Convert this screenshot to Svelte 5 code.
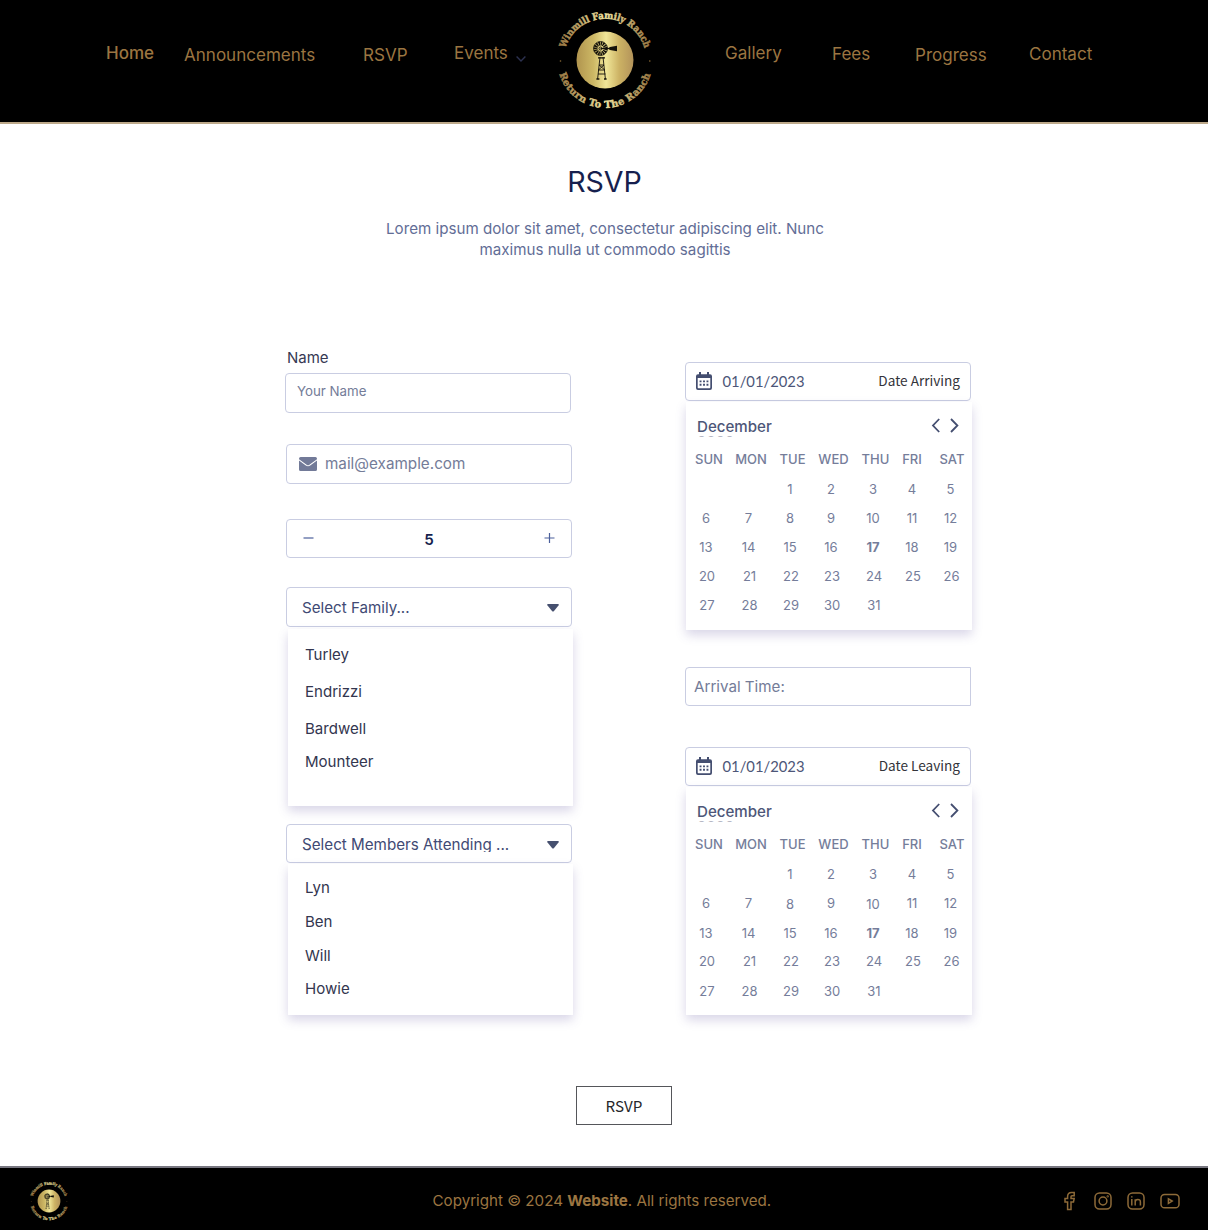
<script>
  const left = [
    ['Home', 'strong'], ['Announcements', 'low'], ['RSVP', 'low'], ['Events', '']
  ];
  const right = [['Gallery', ''], ['Fees', 'mid'], ['Progress', 'low'], ['Contact', 'mid']];
  const families = ['Turley', 'Endrizzi', 'Bardwell', 'Mounteer'];
  const members = ['Lyn', 'Ben', 'Will', 'Howie'];
  const days = ['SUN', 'MON', 'TUE', 'WED', 'THU', 'FRI', 'SAT'];
  const weeks = [
    ['', '', 1, 2, 3, 4, 5],
    [6, 7, 8, 9, 10, 11, 12],
    [13, 14, 15, 16, 17, 18, 19],
    [20, 21, 22, 23, 24, 25, 26],
    [27, 28, 29, 30, 31, '', '']
  ];
</script>

{#snippet logo(id)}
  <svg class="logo" viewBox="-50 -50 100 100" aria-label="Winmill Family Ranch">
    <defs>
      <linearGradient id="{id}-disc" x1="0" x2="1" y1="0" y2="0">
        <stop offset="0" stop-color="#b0944e" />
        <stop offset=".3" stop-color="#cdb865" />
        <stop offset=".52" stop-color="#f0e698" />
        <stop offset=".75" stop-color="#ccb264" />
        <stop offset="1" stop-color="#b3935a" />
      </linearGradient>
      <linearGradient id="{id}-ink" gradientUnits="userSpaceOnUse" x1="-48" x2="48" y1="0" y2="0">
        <stop offset="0" stop-color="#94703c" />
        <stop offset=".5" stop-color="#f2e6a0" />
        <stop offset="1" stop-color="#94703c" />
      </linearGradient>
      <path id="{id}-top" d="M-39.6 -11.6A41.3 41.3 0 0 1 40.1 -10" />
      <path id="{id}-bottom" d="M-45.7 14A47.8 47.8 0 0 0 45.7 14" />
    </defs>
    <circle r="28.5" fill="url(#{id}-disc)" />
    <g fill="url(#{id}-ink)" stroke="url(#{id}-ink)" class="ring">
      <text><textPath href="#{id}-top" textLength="106" lengthAdjust="spacingAndGlyphs">Winmill Family Ranch</textPath></text>
      <text><textPath href="#{id}-bottom" textLength="121" lengthAdjust="spacing">Return To The Ranch</textPath></text>
    </g>
    <circle cx="-44.5" cy="1" r=".8" fill="#8d6a35" />
    <circle cx="44.8" cy="1" r=".8" fill="#8d6a35" />
    <g fill="none" stroke="#14110a">
      <circle cx="-4.5" cy="-11.5" r="5" stroke-width="4" stroke-dasharray="1.5 .6" />
      <circle cx="-4.5" cy="-11.5" r="7" stroke-width=".7" />
      <circle cx="-4.5" cy="-11.5" r="1.5" stroke-width=".9" />
      <path d="M-4.5 -11.5H5" stroke-width="1.2" />
      <path d="M-5 -3L-7.4 19M-2 -3L.4 19M-6 5H-1M-6.6 10H-.2M-6 5L-.2 10M-1 5L-6.6 10M-7 14H.5" stroke-width=".9" />
      <path d="M-7 -2.2H0M-8.6 19H-5.6M-1 19H1.6" stroke-width="1.3" />
    </g>
    <path d="M3 -11.5L5 -13L12 -14.2V-8.8L5 -10Z" fill="#14110a" />
  </svg>
{/snippet}

{#snippet calendar(label, kind)}
  <div class="field date">
    <svg class="cal-icon" viewBox="0 0 16 18">
      <path d="M2 2.2H14A2 2 0 0 1 16 4.2V16A2 2 0 0 1 14 18H2A2 2 0 0 1 0 16V4.2A2 2 0 0 1 2 2.2ZM1.7 6V15.6Q1.7 16.3 2.4 16.3H13.6Q14.3 16.3 14.3 15.6V6Z" fill-rule="evenodd" />
      <path d="M3 0H5V3H3ZM11 0H13V3H11ZM3.6 8.4H5.5V10.3H3.6ZM7.05 8.4H8.95V10.3H7.05ZM10.5 8.4H12.4V10.3H10.5ZM3.6 11.8H5.5V13.7H3.6ZM7.05 11.8H8.95V13.7H7.05ZM10.5 11.8H12.4V13.7H10.5Z" />
    </svg>
    <span class="date-value">01/01/2023</span>
    <span class="date-label">{label}</span>
  </div>
  <div class="panel calendar {kind}">
    <div class="cal-head">
      <div class="month"><span>December</span><span class="year">2022</span></div>
      <svg class="arrows" viewBox="0 0 28 15"><path d="M8.2 1L2 7.5L8.2 14M20 1L26.4 7.5L20 14" /></svg>
    </div>
    <div class="week days">
      {#each days as d}<span>{d}</span>{/each}
    </div>
    {#each weeks as w}
      <div class="week">
        {#each w as d}<span class:today={d === 17}>{d}</span>{/each}
      </div>
    {/each}
  </div>
{/snippet}

<div class="page">
  <header>
    <nav>
      {#each left as [t, c]}<a class={c}>{t}</a>{/each}
      <svg class="chev" viewBox="0 0 10 6"><path d="M.6 .6L5 5L9.4 .6" /></svg>
      {@render logo('main')}
      {#each right as [t, c]}<a class={c}>{t}</a>{/each}
    </nav>
  </header>

  <main>
    <h1>RSVP</h1>
    <p class="intro">Lorem ipsum dolor sit amet, consectetur adipiscing elit. Nunc<br />maximus nulla ut commodo sagittis</p>

    <div class="form">
      <div class="col left">
        <span class="name-label">Name</span>
        <div class="field name">Your Name</div>
        <div class="field mail">
          <svg viewBox="0 0 18 14"><path d="M1.6 0H16.4Q18 0 18 1.7V2.2L10.4 7.8Q9 8.8 7.6 7.8L0 2.2V1.7Q0 0 1.6 0ZM0 3.4L6.8 8.6Q9 10.1 11.2 8.6L18 3.4V12.4Q18 14 16.4 14H1.6Q0 14 0 12.4Z" /></svg>
          <span>mail@example.com</span>
        </div>
        <div class="field stepper">
          <svg viewBox="0 0 10 10"><path d="M0 5H10" /></svg>
          <b>5</b>
          <svg viewBox="0 0 10 10"><path d="M0 5H10M5 0V10" /></svg>
        </div>
        <div class="field select">
          <span>Select Family...</span>
          <svg viewBox="0 0 12 8"><path d="M1 0H11Q12.4 .3 11.5 1.5L7 7Q6 8 5 7L.5 1.5Q-.4 .3 1 0Z" /></svg>
        </div>
        <div class="panel list families">
          {#each families as f}<span>{f}</span>{/each}
        </div>
        <div class="field select members-select">
          <span>Select Members Attending ...</span>
          <svg viewBox="0 0 12 8"><path d="M1 0H11Q12.4 .3 11.5 1.5L7 7Q6 8 5 7L.5 1.5Q-.4 .3 1 0Z" /></svg>
        </div>
        <div class="panel list members">
          {#each members as m}<span>{m}</span>{/each}
        </div>
      </div>
      <div class="col right">
        {@render calendar('Date Arriving', 'arriving')}
        <div class="field time">Arrival Time:</div>
        {@render calendar('Date Leaving', 'leaving')}
      </div>
    </div>
    <button>RSVP</button>
  </main>

  <footer>
    {@render logo('small')}
    <p>Copyright © 2024 <b>Website</b>. All rights reserved.</p>
    <div class="social">
      <svg viewBox="0 0 20 20"><path d="M13.8 1.5H11.6Q7.6 1.5 7.6 5.5V7.6H5V11H7.6V18.6H11V11H13.5L14.2 7.6H11V5.8Q11 4.8 12 4.8H14.2V1.5Z" /></svg>
      <svg viewBox="0 0 20 20"><rect x="2" y="2" width="16" height="16" rx="4.5" /><circle cx="10" cy="10" r="3.9" /><circle cx="14.7" cy="5.4" r=".4" /></svg>
      <svg viewBox="0 0 20 20"><rect x="2" y="2" width="16" height="16" rx="4.5" /><path d="M5.8 8V14.6M5.8 5.2V6.4M9.2 14.6V8.2M9.2 11Q9.2 8.4 11.8 8.4T14.4 11V14.6" /></svg>
      <svg viewBox="0 0 20 20"><rect x="1" y="3.4" width="18" height="13.4" rx="3.6" /><path d="M8.4 7.8V12.4L12.2 10.1Z" /></svg>
    </div>
  </footer>
</div>

<style>
  :global(body) { margin: 0; background: #fff; }
  .page { width: 1208px; height: 1230px; font-family: Inter, sans-serif; display: flex; flex-direction: column; overflow: hidden; }
  header { box-sizing: border-box; height: 124px; background: #000; border-bottom: 2px solid #bda98a; }
  nav {
    display: grid; height: 122px; padding-left: 106px; align-items: start;
    grid-template-columns: 78px 179px 91px 62px 39px 170px 107px 83px 114px 100px;
  }
  nav a { color: #9b7541; font-size: 17.05px; line-height: 20px; margin-top: 43px; white-space: nowrap; }
  nav .strong { font-weight: 500; }
  nav .low { margin-top: 45px; }
  nav .mid { margin-top: 44px; }
  .chev { width: 10px; height: 6px; margin-top: 56px; fill: none; stroke: #2c3150; stroke-width: 1.4; }
  .logo { width: 100px; height: 100px; margin-top: 10px; overflow: visible; }
  .ring { font: bold 9.7px 'DejaVu Serif', serif; stroke-width: .5; }

  main { height: 1042px; display: flex; flex-direction: column; align-items: center; }
  h1 { margin: 40px 0 0 1px; font-size: 28.6px; line-height: 36px; font-weight: 400; color: #161f4e; }
  .intro { margin: 18px 0 0 2px; font-size: 15.17px; line-height: 21px; text-align: center; color: #626d96; }
  .form { display: flex; width: 1208px; margin-top: 84px; height: 742px; flex: none; }
  .col { width: 286px; display: flex; flex-direction: column; }
  .left { margin-left: 286px; }
  .right { margin-left: 113px; padding-top: 18px; }
  .field {
    box-sizing: border-box; width: 286px; height: 39px; border: 1px solid #c9cde2; border-radius: 4px;
    display: flex; align-items: center; flex: none; font-size: 15.15px; color: #747c98;
  }
  .name-label { font-size: 15px; line-height: 20px; color: #363953; margin: 4px 0 5px 1px; }
  .name { margin-left: -1px; height: 40px; font-size: 13.3px; padding: 0 0 4px 11px; }
  .mail { margin-top: 31px; height: 40px; padding: 0 0 1px 12px; gap: 8px; }
  .mail svg { width: 18px; height: 14px; fill: #727a98; margin-top: 1px; }
  .mail span { font-size: 15.25px; }
  .stepper { margin-top: 35px; padding: 0 16px; justify-content: space-between; }
  .stepper svg { width: 11px; height: 10px; stroke: #4b5f9b; stroke-width: 1.2; margin-bottom: 1px; }
  .stepper b { font-weight: 600; color: #161f4e; padding-top: 2px; }
  .select { margin-top: 29px; height: 40px; padding: 0 12px 0 15px; justify-content: space-between; color: #414a74; }
  .select svg { width: 12px; height: 8px; fill: #46506f; margin-top: 1px; }
  .panel { box-sizing: border-box; width: 285px; box-shadow: 0 5px 10px rgba(80, 70, 150, .22); flex: none; background: #fff; }
  .list { margin-left: 2px; margin-top: 2px; padding-left: 17px; display: grid; align-content: start; font-size: 15.05px; color: #33364f; }
  .families { height: 177px; padding-top: 7px; grid-template-rows: 37px 37px 37px 29px; align-items: center; }
  .members-select { margin-top: 18px; height: 39px; }
  .members-select span { height: 17px; line-height: 18px; overflow: hidden; padding-top: 1px; box-sizing: border-box; font-size: 15.2px; }
  .members-select svg { margin-top: 2px; }
  .members { height: 151px; margin-top: 1px; padding-top: 6px; grid-template-rows: 34px 34px 34px 32px; align-items: center; }
  .date { padding: 0 10px 2px 10px; }
  .cal-icon { width: 16px; height: 18px; fill: #444e70; }
  .date-value { font: 14.8px Lato, sans-serif; color: #4d5678; margin-left: 10.5px; padding-top: 1px; }
  .date-label { font: 13.6px 'Noto Sans CJK JP', sans-serif; color: #33343a; margin: -1px 0 0 auto; }
  .leaving-label { margin-top: 0; }
  .calendar { width: 286px; height: 228px; margin: 1px 0 0 1px; color: #757d9a; font-size: 13px; }
  .cal-head { display: flex; justify-content: space-between; height: 43px; padding: 15px 13px 0 11px; box-sizing: border-box; }
  .month { display: flex; flex-direction: column; height: 20px; overflow: hidden; font-size: 15.1px; line-height: 19px; color: #4d5678; font-weight: 500; }
  .year { color: #b5b7c4; font-weight: 400; margin-top: -4px; }
  .arrows { width: 28px; height: 15px; fill: none; stroke: #444e70; stroke-width: 1.8; margin-top: .5px; }
  .week { display: grid; grid-template-columns: 42px 43px 40px 42px 42px 36px 41px; height: 29px; line-height: 29px; text-align: center; margin-left: -1px; }
  .week:nth-child(n + 6) { margin-left: 0; }
  .week.days { grid-template-columns: 42px 42px 41px 41px 43px 30px 50px; height: 30px; font-weight: 500; margin-left: 2px; }
  .leaving .week:nth-child(5), .leaving .week:nth-child(7),
  .leaving .week:nth-child(4) span:nth-child(3), .leaving .week:nth-child(4) span:nth-child(5) { line-height: 31px; }
  .today { font-weight: 700; }
  .time { margin-top: 37px; padding-left: 8px; border-radius: 4px 0 0 4px; }
  .time + .date { margin-top: 41px; }
  button { margin: 0 0 0 40px; width: 96px; height: 39px; flex: none; border: 1px solid #55565a; background: #fff; font: 15.2px 'Noto Sans CJK JP', sans-serif; color: #26272b; padding: 0 0 2px 0; }

  footer {
    height: 64px; box-sizing: border-box; border-top: 2px solid #777680; background: #000; color: #9b7541;
    display: grid; grid-template-columns: 404px 340px 1fr; align-items: center; padding: 4px 28.5px 0 28.5px;
  }
  footer .logo, footer :global(.logo) { width: 40px; height: 40px; margin: 0; }
  footer p { margin: 0; font-size: 15.16px; white-space: nowrap; padding-bottom: 2px; }
  .social { display: flex; gap: 13.3px; justify-content: flex-end; }
  .social svg { width: 20px; height: 20px; fill: none; stroke: #8d6a38; stroke-width: 1.5; }
</style>
